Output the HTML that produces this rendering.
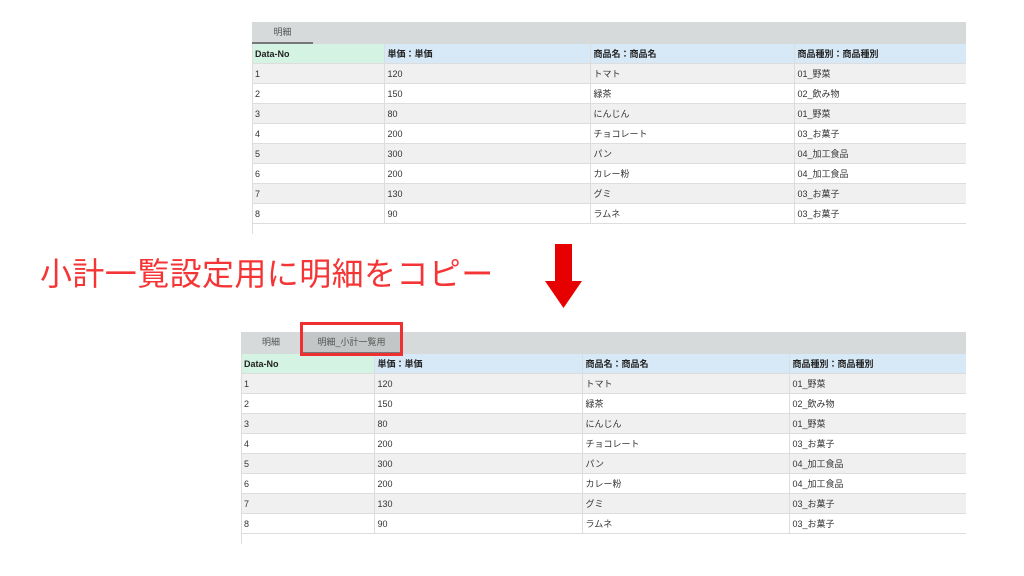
<!DOCTYPE html>
<html><head><meta charset="utf-8"><style>
body{margin:0;width:1024px;height:576px;background:#fff;position:relative;overflow:hidden;font-family:"Liberation Sans","Noto Sans CJK JP",sans-serif;}
.g{position:absolute;}
.tabbar{position:absolute;left:0;right:0;top:0;height:22px;background:#d6dadb;}
.tab{position:absolute;top:0;height:22px;font-size:9px;color:#555;line-height:20px;text-align:center;}
table{position:absolute;left:0;border-collapse:collapse;table-layout:fixed;font-size:9px;color:#333;}
td{height:19px;border-right:1px solid #ddd;border-bottom:1px solid #ddd;padding:0 0 0 3px;white-space:nowrap;}
td:last-child{border-right:none;}
tr.h td{background:#d7e8f6;font-weight:bold;color:#222;}
tr.h td:first-child{background:#d4f3e2;}
tr.o td{background:#f0f0f0;}
.lb{position:absolute;left:0;width:1px;background:#ddd;}
</style></head><body>

<div class="g" style="left:252px;top:22px;width:714px;height:212px;">
 <div class="tabbar"></div>
 <div class="tab" style="left:0;width:61px;border-bottom:2px solid #777;height:20px;">明細</div>
 <table style="top:22px;width:714px;">
  <colgroup><col style="width:132px"><col style="width:206px"><col style="width:204px"><col style="width:172px"></colgroup>
  <tr class="h"><td>Data-No</td><td>単価：単価</td><td>商品名：商品名</td><td>商品種別：商品種別</td></tr>
  <tr class="o"><td>1</td><td>120</td><td>トマト</td><td>01_野菜</td></tr>
  <tr><td>2</td><td>150</td><td>緑茶</td><td>02_飲み物</td></tr>
  <tr class="o"><td>3</td><td>80</td><td>にんじん</td><td>01_野菜</td></tr>
  <tr><td>4</td><td>200</td><td>チョコレート</td><td>03_お菓子</td></tr>
  <tr class="o"><td>5</td><td>300</td><td>パン</td><td>04_加工食品</td></tr>
  <tr><td>6</td><td>200</td><td>カレー粉</td><td>04_加工食品</td></tr>
  <tr class="o"><td>7</td><td>130</td><td>グミ</td><td>03_お菓子</td></tr>
  <tr><td>8</td><td>90</td><td>ラムネ</td><td>03_お菓子</td></tr>
 </table>
 <div class="lb" style="top:22px;height:190px;"></div>
</div>

<div class="g" style="left:40px;top:254px;font-size:32px;color:#f53535;line-height:40px;letter-spacing:0.4px;">小計一覧設定用に明細をコピー</div>

<svg class="g" style="left:540px;top:240px;" width="50" height="72">
 <polygon points="15,4 32,4 32,41 42,41 23.5,68 5,41 15,41" fill="#e60000"/>
</svg>

<div class="g" style="left:241px;top:332px;width:725px;height:212px;">
 <div class="tabbar"></div>
 <div class="tab" style="left:0;width:60px;">明細</div>
 <div class="tab" style="left:62px;width:97px;background:#c3c6c6;border-bottom:2px solid #777;height:20px;">明細_小計一覧用</div>
 <table style="top:22px;width:725px;">
  <colgroup><col style="width:133px"><col style="width:208px"><col style="width:207px"><col style="width:177px"></colgroup>
  <tr class="h"><td>Data-No</td><td>単価：単価</td><td>商品名：商品名</td><td>商品種別：商品種別</td></tr>
  <tr class="o"><td>1</td><td>120</td><td>トマト</td><td>01_野菜</td></tr>
  <tr><td>2</td><td>150</td><td>緑茶</td><td>02_飲み物</td></tr>
  <tr class="o"><td>3</td><td>80</td><td>にんじん</td><td>01_野菜</td></tr>
  <tr><td>4</td><td>200</td><td>チョコレート</td><td>03_お菓子</td></tr>
  <tr class="o"><td>5</td><td>300</td><td>パン</td><td>04_加工食品</td></tr>
  <tr><td>6</td><td>200</td><td>カレー粉</td><td>04_加工食品</td></tr>
  <tr class="o"><td>7</td><td>130</td><td>グミ</td><td>03_お菓子</td></tr>
  <tr><td>8</td><td>90</td><td>ラムネ</td><td>03_お菓子</td></tr>
 </table>
 <div class="lb" style="top:22px;height:190px;"></div>
</div>

<div class="g" style="left:300px;top:322px;width:97px;height:28px;border:3px solid #f03030;"></div>
</body></html>
